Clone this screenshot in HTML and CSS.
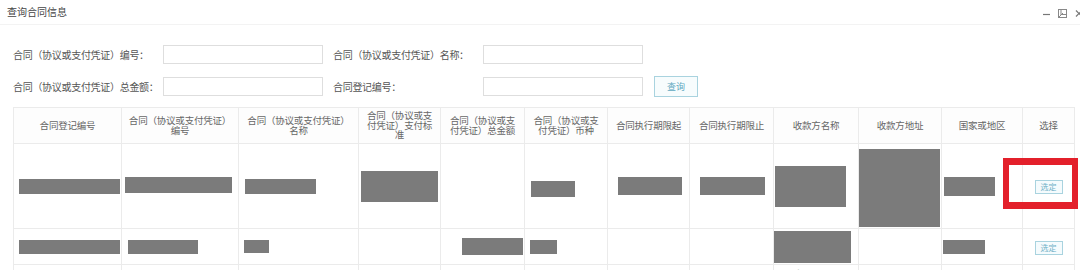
FILE: index.html
```html
<!DOCTYPE html>
<html lang="zh-CN">
<head>
  <meta charset="UTF-8">
  <title>查询合同信息</title>
  <link rel="stylesheet" href="styles.css">
</head>
<body>
  <div class="window">
    <!-- title bar -->
    <div class="titlebar">
      <span class="title">查询合同信息</span>
      <svg class="win-ctrls" width="44" height="12" viewBox="0 0 44 12">
        <line x1="2" y1="6.5" x2="9" y2="6.5" stroke="#777" stroke-width="1.2"/>
        <rect x="17.5" y="1.5" width="8" height="8" fill="none" stroke="#888" stroke-width="1"/>
        <rect x="20" y="1.5" width="5.5" height="5" fill="none" stroke="#888" stroke-width="1"/>
        <line x1="18" y1="9" x2="22" y2="5" stroke="#888" stroke-width="1"/>
        <line x1="35" y1="2.5" x2="41" y2="8.5" stroke="#777" stroke-width="1.2"/>
        <line x1="41" y1="2.5" x2="35" y2="8.5" stroke="#777" stroke-width="1.2"/>
      </svg>
    </div>

    <!-- search form -->
    <div class="search">
      <div class="search-row">
        <label class="field-label">合同（协议或支付凭证）编号：</label>
        <input class="field-input" type="text">
        <label class="field-label">合同（协议或支付凭证）名称：</label>
        <input class="field-input" type="text">
      </div>
      <div class="search-row tall">
        <label class="field-label">合同（协议或支付凭证）总金额：</label>
        <input class="field-input" type="text">
        <label class="field-label">合同登记编号：</label>
        <input class="field-input" type="text">
        <button class="query-btn" type="button">查询</button>
      </div>
    </div>

    <!-- result table -->
    <div class="table-wrap">
      <table class="grid">
        <colgroup>
          <col class="w108"><col class="w117"><col class="w120"><col class="w82">
          <col class="w84"><col class="w83"><col class="w82"><col class="w84">
          <col class="w85"><col class="w83"><col class="w81"><col class="w52">
        </colgroup>
        <thead>
          <tr>
            <th>合同登记编号</th>
            <th>合同（协议或支付凭证）<br>编号</th>
            <th>合同（协议或支付凭证）<br>名称</th>
            <th>合同（协议或支<br>付凭证）支付标<br>准</th>
            <th>合同（协议或支<br>付凭证）总金额</th>
            <th>合同（协议或支<br>付凭证）币种</th>
            <th>合同执行期限起</th>
            <th>合同执行期限止</th>
            <th>收款方名称</th>
            <th>收款方地址</th>
            <th>国家或地区</th>
            <th>选择</th>
          </tr>
        </thead>
        <tbody>
          <tr class="row-tall">
            <td><span class="mask m1"></span></td>
            <td><span class="mask m2"></span></td>
            <td><span class="mask m3"></span></td>
            <td><span class="mask m4"></span></td>
            <td></td>
            <td><span class="mask m6"></span></td>
            <td><span class="mask m7"></span></td>
            <td><span class="mask m8"></span></td>
            <td><span class="mask m9"></span></td>
            <td><span class="mask m10"></span></td>
            <td><span class="mask m11"></span></td>
            <td class="pick"><button class="pick-btn" type="button">选定</button></td>
          </tr>
          <tr class="row-short">
            <td><span class="mask n1"></span></td>
            <td><span class="mask n2"></span></td>
            <td><span class="mask n3"></span></td>
            <td></td>
            <td><span class="mask n5"></span></td>
            <td><span class="mask n6"></span></td>
            <td></td>
            <td></td>
            <td><span class="mask n9"></span></td>
            <td></td>
            <td><span class="mask n11"></span></td>
            <td class="pick"><button class="pick-btn" type="button">选定</button></td>
          </tr>
          <tr class="row-cut">
            <td></td><td></td><td></td><td></td><td></td><td></td><td></td><td></td>
            <td class="cut-text">国际贸易有限公司</td>
            <td></td><td></td><td></td>
          </tr>
        </tbody>
      </table>
      <div class="highlight"></div>
    </div>
  </div>
</body>
</html>
```

FILE: styles.css
```css
body {
  margin: 0;
  background: #ffffff;
  font-family: "Noto Sans CJK SC", "Noto Sans", sans-serif;
  font-size: 10px;
  color: #555;
}

.window {
  width: 1080px;
  height: 270px;
  overflow: hidden;
}

/* title bar */
.titlebar {
  display: flex;
  justify-content: space-between;
  align-items: center;
  height: 24px;
  padding-left: 7px;
  border-bottom: 1px solid #f3f3f3;
}

.title {
  font-size: 10px;
  color: #444;
  line-height: 12px;
  margin-top: -1px;
}

.win-ctrls {
  margin-right: -5px;
  margin-top: 4px;
}

/* search form */
.search {
  padding: 20px 0 0 13px;
  display: flex;
  flex-direction: column;
  gap: 12px;
}

.search-row {
  display: flex;
  align-items: center;
  height: 19px;
}

.search-row.tall {
  height: 21px;
}

.field-label {
  width: 150px;
  color: #555;
  white-space: nowrap;
  letter-spacing: -0.3px;
}

.field-input {
  box-sizing: border-box;
  width: 160px;
  height: 19px;
  margin: 0 10px 0 0;
  border: 1px solid #dedede;
  background: #fff;
  padding: 0 4px;
}

.query-btn {
  box-sizing: border-box;
  width: 44px;
  height: 21px;
  margin-left: 1px;
  padding: 0;
  border: 1px solid #a9d3df;
  background: #f7fcfd;
  color: #5fa8c0;
  font-family: inherit;
  font-size: 9px;
}

/* result table */
.table-wrap {
  position: relative;
  margin: 10px 0 0 13px;
}

.grid {
  table-layout: fixed;
  border-collapse: collapse;
  width: 1061px;
}

.w108 { width: 108px; }
.w117 { width: 117px; }
.w120 { width: 120px; }
.w82 { width: 82px; }
.w84 { width: 84px; }
.w83 { width: 83px; }
.w85 { width: 85px; }
.w81 { width: 81px; }
.w52 { width: 52px; }

.grid th,
.grid td {
  border: 1px solid #ebebeb;
  padding: 0;
}

.grid th {
  height: 35px;
  font-weight: normal;
  color: #666;
  font-size: 9.5px;
  line-height: 9.5px;
  text-align: center;
  letter-spacing: -0.2px;
  background: #fdfdfd;
}

.row-tall td { height: 84px; }
.row-short td { height: 35px; }
.row-cut td { height: 30px; vertical-align: top; }

.grid td { text-align: left; }

.cut-text {
  padding: 3px 0 0 3px !important;
  color: #333;
  font-size: 9px;
}

/* redaction blocks */
.mask {
  display: block;
  background: #7b7b7b;
}

.m1 { width: 101px; height: 15px; margin-left: 5px; }
.m2 { width: 107px; height: 16px; margin-left: 3px; margin-top: -3px; }
.m3 { width: 71px; height: 15px; margin-left: 6px; }
.m4 { width: 77px; height: 31px; margin-left: 2px; }
.m6 { width: 44px; height: 16px; margin-left: 6px; margin-top: 5px; }
.m7 { width: 64px; height: 18px; margin-left: 10px; }
.m8 { width: 65px; height: 18px; margin-left: 10px; }
.m9 { width: 71px; height: 41px; margin-left: 1px; }
.m10 { width: 81px; height: 78px; margin-left: 0; margin-top: 3px; }
.m11 { width: 51px; height: 19px; margin-left: 2px; }

.n1 { width: 101px; height: 14px; margin-left: 5px; }
.n2 { width: 70px; height: 14px; margin-left: 6px; }
.n3 { width: 25px; height: 13px; margin-left: 5px; }
.n5 { width: 61px; height: 17px; margin-left: 21px; }
.n6 { width: 27px; height: 14px; margin-left: 5px; }
.n9 { width: 77px; height: 32px; margin-left: 0; }
.n11 { width: 42px; height: 14px; margin-left: 1px; }

/* pick buttons */
.grid td.pick {
  text-align: center;
}

.pick-btn {
  box-sizing: border-box;
  width: 28px;
  height: 14px;
  padding: 0;
  border: 1px solid #a9d3df;
  background: #f5fbfd;
  color: #6fb0c6;
  font-family: inherit;
  font-size: 8px;
  line-height: 12px;
  vertical-align: middle;
}

/* red marker drawn over the first pick cell */
.highlight {
  position: absolute;
  left: 990px;
  top: 51px;
  width: 63px;
  height: 37px;
  border: 6px solid #e3202b;
  border-top-width: 7px;
  border-bottom-width: 7px;
}
```
